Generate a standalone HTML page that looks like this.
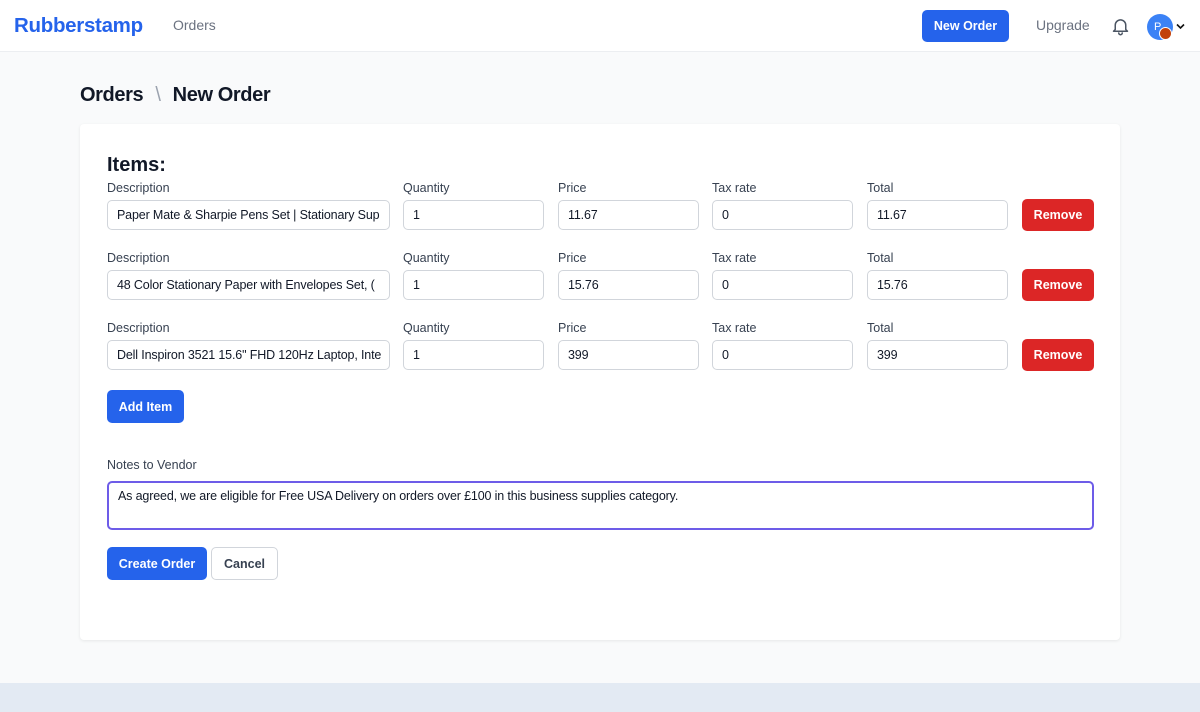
<!DOCTYPE html>
<html><head><style>
*{box-sizing:border-box;margin:0;padding:0}
body{width:1200px;height:712px;overflow:hidden;background:#f9fafb;font-family:"Liberation Sans",Arial,sans-serif;color:#111827;position:relative}
.hdr{position:absolute;left:0;top:0;width:1200px;height:52px;background:#fff;border-bottom:1px solid #eceef1}
.abs{position:absolute}
.logo{left:14px;top:14px;font-size:20.5px;font-weight:bold;color:#2563eb;letter-spacing:-0.3px}
.nav{left:173px;top:17px;font-size:14px;color:#6b7280}
.btn{position:absolute;border-radius:5px;font-size:12.5px;font-weight:bold;display:flex;align-items:center;justify-content:center}
.blue{background:#2563eb;color:#fff}
.red{background:#dc2626;color:#fff}
.card{left:80px;top:124px;width:1040px;height:516px;background:#fff;border-radius:4px;box-shadow:0 1px 3px rgba(0,0,0,0.08)}
.lbl{position:absolute;font-size:12.5px;color:#374151}
.inp{position:absolute;height:30px;border:1px solid #d1d5db;border-radius:5px;font-size:12.5px;letter-spacing:-0.15px;color:#111827;padding:0 9px;line-height:28px;white-space:nowrap;overflow:hidden;background:#fff}
</style></head><body>
<div class="hdr">
<div class="abs logo">Rubberstamp</div>
<div class="abs nav">Orders</div>
<div class="btn blue" style="left:922px;top:10px;width:87px;height:32px">New Order</div>
<div class="abs" style="left:1036px;top:17px;font-size:14px;color:#6b7280">Upgrade</div>
<svg class="abs" style="left:1110px;top:15px" width="21" height="22" viewBox="0 0 24 24" fill="none" stroke="#4b5563" stroke-width="1.7" stroke-linecap="round" stroke-linejoin="round"><path d="M18 16V11a6 6 0 0 0-12 0v5l-2 2h16z"/><path d="M10 20a2 2 0 0 0 4 0"/></svg>
<div class="abs" style="left:1147px;top:14px;width:26px;height:26px;border-radius:50%;background:#3b82f6;color:#fff;font-size:11px;line-height:26px;padding-left:7px">P</div>
<div class="abs" style="left:1159px;top:27px;width:13px;height:13px;border-radius:50%;background:#c2410c;border:1px solid #fff"></div>
<svg class="abs" style="left:1176px;top:23px" width="9" height="7" viewBox="0 0 9 7"><path d="M1 1.5l3.5 3.5 3.5-3.5" fill="none" stroke="#111" stroke-width="1.6"/></svg>
</div>
<div class="abs" style="left:80px;top:84px;font-size:20px;font-weight:bold;letter-spacing:-0.4px">Orders <span style="color:#9ca3af;font-weight:normal;margin:0 7px">\</span> New Order</div>
<div class="abs card"></div>
<div class="abs" style="left:107px;top:154px;font-size:20px;font-weight:bold">Items:</div>

<div class="lbl" style="left:107px;top:181px">Description</div><div class="lbl" style="left:403px;top:181px">Quantity</div><div class="lbl" style="left:558px;top:181px">Price</div><div class="lbl" style="left:712px;top:181px">Tax rate</div><div class="lbl" style="left:867px;top:181px">Total</div>
<div class="inp" style="left:107px;top:200px;width:283px">Paper Mate &amp; Sharpie Pens Set | Stationary Sup</div>
<div class="inp" style="left:403px;top:200px;width:141px">1</div><div class="inp" style="left:558px;top:200px;width:141px">11.67</div><div class="inp" style="left:712px;top:200px;width:141px">0</div><div class="inp" style="left:867px;top:200px;width:141px">11.67</div>
<div class="btn red" style="left:1022px;top:199px;width:72px;height:32px">Remove</div>

<div class="lbl" style="left:107px;top:251px">Description</div><div class="lbl" style="left:403px;top:251px">Quantity</div><div class="lbl" style="left:558px;top:251px">Price</div><div class="lbl" style="left:712px;top:251px">Tax rate</div><div class="lbl" style="left:867px;top:251px">Total</div>
<div class="inp" style="left:107px;top:270px;width:283px">48 Color Stationary Paper with Envelopes Set, (</div>
<div class="inp" style="left:403px;top:270px;width:141px">1</div><div class="inp" style="left:558px;top:270px;width:141px">15.76</div><div class="inp" style="left:712px;top:270px;width:141px">0</div><div class="inp" style="left:867px;top:270px;width:141px">15.76</div>
<div class="btn red" style="left:1022px;top:269px;width:72px;height:32px">Remove</div>

<div class="lbl" style="left:107px;top:321px">Description</div><div class="lbl" style="left:403px;top:321px">Quantity</div><div class="lbl" style="left:558px;top:321px">Price</div><div class="lbl" style="left:712px;top:321px">Tax rate</div><div class="lbl" style="left:867px;top:321px">Total</div>
<div class="inp" style="left:107px;top:340px;width:283px">Dell Inspiron 3521 15.6" FHD 120Hz Laptop, Inte</div>
<div class="inp" style="left:403px;top:340px;width:141px">1</div><div class="inp" style="left:558px;top:340px;width:141px">399</div><div class="inp" style="left:712px;top:340px;width:141px">0</div><div class="inp" style="left:867px;top:340px;width:141px">399</div>
<div class="btn red" style="left:1022px;top:339px;width:72px;height:32px">Remove</div>

<div class="btn blue" style="left:107px;top:390px;width:77px;height:33px">Add Item</div>
<div class="lbl" style="left:107px;top:458px">Notes to Vendor</div>
<div class="inp" style="left:107px;top:481px;width:987px;height:49px;border:2px solid #6d5ce8;line-height:26px;padding:0 9px">As agreed, we are eligible for Free USA Delivery on orders over £100 in this business supplies category.</div>
<div class="btn blue" style="left:107px;top:547px;width:100px;height:33px">Create Order</div>
<div class="btn" style="left:211px;top:547px;width:67px;height:33px;border:1px solid #d1d5db;color:#374151;background:#fff">Cancel</div>
<div class="abs" style="left:0;top:683px;width:1200px;height:29px;background:#e3eaf3"></div>
</body></html>
